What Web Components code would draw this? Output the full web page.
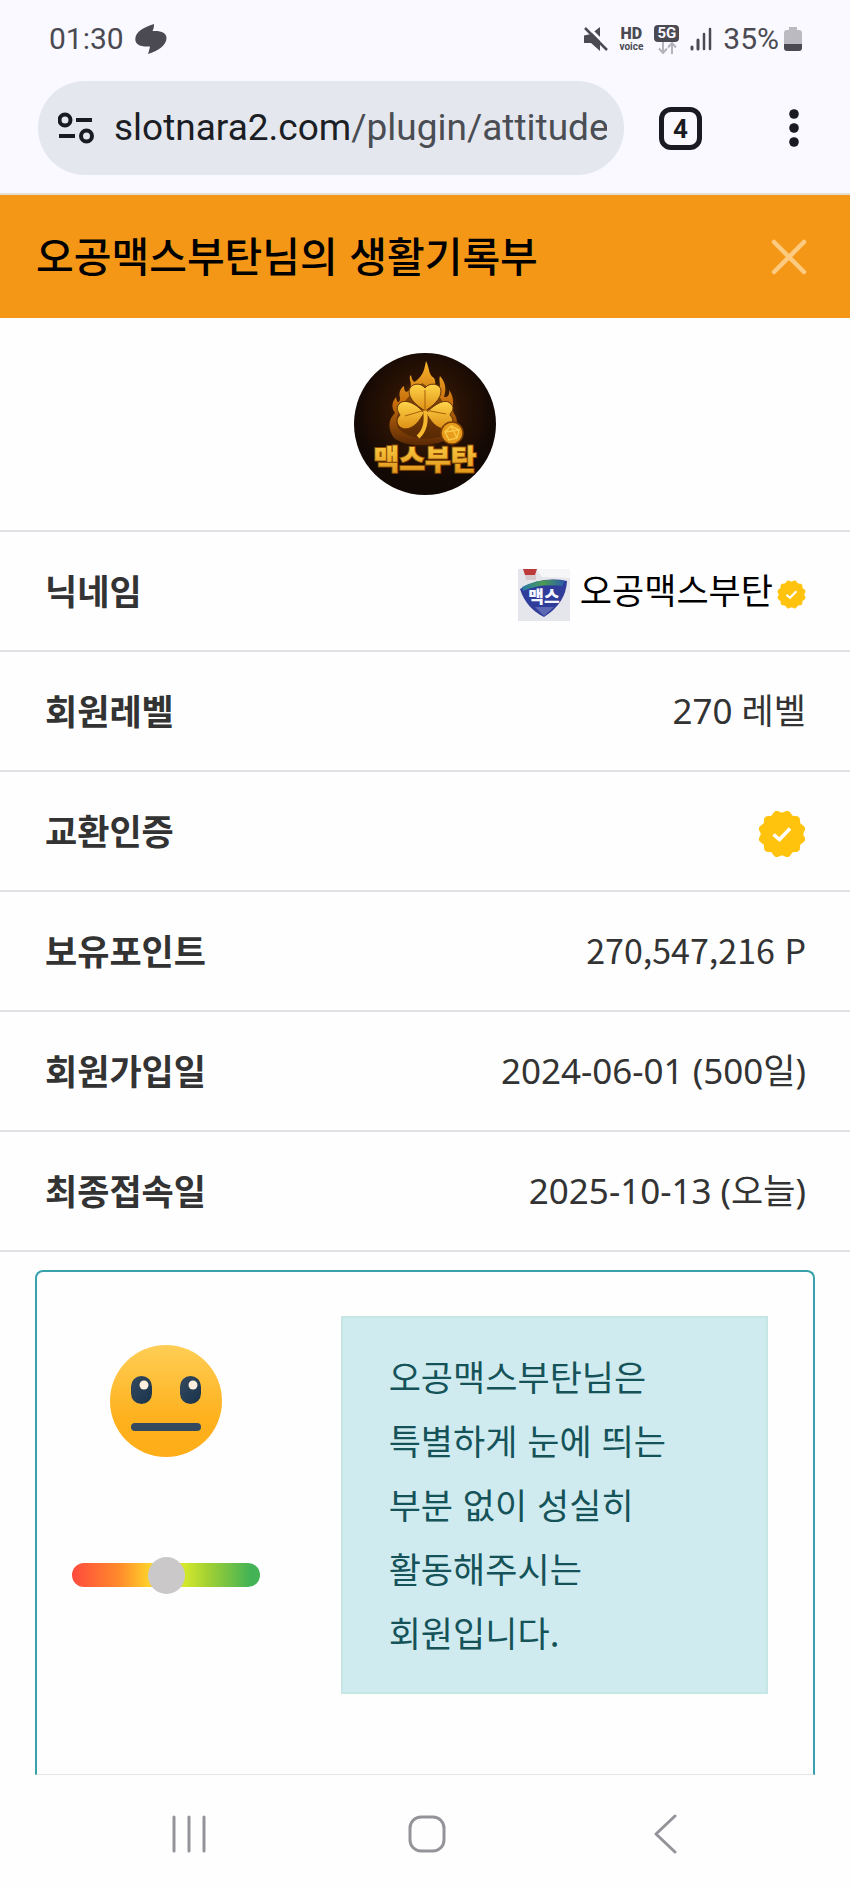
<!DOCTYPE html>
<html lang="ko">
<head>
<meta charset="UTF-8">
<meta name="viewport" content="width=device-width, initial-scale=1">
<title>오공맥스부탄님의 생활기록부</title>
<style>
  body {
    margin: 0;
    background: #fefefe;
    font-family: 'Noto Sans CJK KR', sans-serif;
    font-size: 35px;
    color: #333;
  }
</style>
</head>
<body>
<phone-screen>
  <status-bar slot="top" time="01:30" battery="35%"></status-bar>
  <browser-bar slot="top" host="slotnara2.com" path="/plugin/attitude" tabs="4"></browser-bar>
  <page-header>오공맥스부탄님의 생활기록부</page-header>
  <user-avatar></user-avatar>
  <profile-table></profile-table>
  <attitude-card value="50">오공맥스부탄님은 특별하게 눈에 띄는 부분 없이 성실히 활동해주시는 회원입니다.</attitude-card>
  <nav-bar slot="bottom"></nav-bar>
</phone-screen>

<script>
class PhoneScreen extends HTMLElement {
  constructor() {
    super();
    this.attachShadow({ mode: 'open' });
    this.shadowRoot.innerHTML = `
      <style>
        :host {
          display: flex;
          flex-direction: column;
          min-height: 100vh;
        }
        main {
          flex: 1;
          display: flex;
          flex-direction: column;
        }
      </style>
      <slot name="top"></slot>
      <main><slot></slot></main>
      <slot name="bottom"></slot>
    `;
  }
}

class StatusBar extends HTMLElement {
  connectedCallback() {
    this.attachShadow({ mode: 'open' });
    this.shadowRoot.innerHTML = `
      <style>
        :host {
          display: flex;
          align-items: center;
          justify-content: space-between;
          height: 78px;
          padding: 0 48px 0 49px;
          background: #f9f9ff;
          color: #4b4a52;
          font-family: Roboto, sans-serif;
          font-size: 30px;
          line-height: 36px;
        }
        .group {
          display: flex;
          align-items: center;
          gap: 11px;
        }
        .hd {
          display: flex;
          flex-direction: column;
          align-items: center;
          font-size: 16px;
          line-height: 15px;
          font-weight: 900;
        }
        .hd small {
          font-size: 10px;
          line-height: 11px;
          font-weight: 700;
        }
        .net {
          display: flex;
          flex-direction: column;
          align-items: center;
        }
        .net b {
          width: 25px;
          border-radius: 4px;
          background: #4b4a52;
          color: #f9f9ff;
          font-size: 15px;
          line-height: 17px;
          text-align: center;
        }
        .level {
          display: flex;
          align-items: center;
          gap: 5px;
        }
        svg { display: block; }
      </style>
      <div class="group">
        <span>${this.getAttribute('time')}</span>
        <svg width="32" height="30" viewBox="0 0 32 30" fill="#4b4a52">
          <path d="M19 0C9 3 0 8 .3 15.500C.5 20 4 23 15 22.500C14.500 25 14 27 13 30C23 27 32 21 31.500 13.500C31 9 27 6.500 17.500 7C18.500 5 19 3 19 0Z"/>
        </svg>
      </div>
      <div class="group">
        <svg width="25" height="26" viewBox="0 0 25 26">
          <path fill="#4b4a52" d="M1 9.500L8 8L17 1V25L8 17H1Z"/>
          <path stroke="#f9f9ff" stroke-width="3" d="M4 0L25 21"/>
          <path stroke="#4b4a52" stroke-width="2.500" d="M2 2L24 24"/>
        </svg>
        <span class="hd">HD<small>voice</small></span>
        <span class="net">
          <b>5G</b>
          <svg width="20" height="12" viewBox="0 0 20 12" fill="none" stroke="#b5b4bb" stroke-width="2">
            <path d="M6 0V11M2 6.500L6 11L10 6.500M15 12V1M11 5.500L15 1L19 5.500"/>
          </svg>
        </span>
        <svg width="22" height="24" viewBox="0 0 22 24" stroke="#4b4a52" stroke-width="3" stroke-linecap="round">
          <path d="M2 20V22M8 13V22"/><path stroke-width="2.500" d="M14 7V22M20 2V22"/>
        </svg>
        <span class="level">
          <span>${this.getAttribute('battery')}</span>
          <svg width="18" height="26" viewBox="0 0 18 26">
            <path fill="#bbbac1" d="M5 1H13V4H15Q18 4 18 7V18H0V7Q0 4 3 4H5Z"/>
            <path fill="#4b4a52" d="M0 18H18V22Q18 25 15 25H3Q0 25 0 22Z"/>
          </svg>
        </span>
      </div>
    `;
  }
}

class BrowserBar extends HTMLElement {
  connectedCallback() {
    this.attachShadow({ mode: 'open' });
    this.shadowRoot.innerHTML = `
      <style>
        :host {
          display: flex;
          align-items: center;
          padding: 3px 0 18px 38px;
          background: #f9f9ff;
          border-bottom: 2px solid #e3e0d6;
        }
        button {
          padding: 0;
          border: 0;
          background: none;
          font-family: Roboto, sans-serif;
          color: #1a1a22;
        }
        .address {
          flex: 1;
          min-width: 0;
          display: flex;
          align-items: center;
          gap: 20px;
          height: 94px;
          padding: 0 17px 0 20px;
          border-radius: 47px;
          background: #e4e7ee;
        }
        .address svg { flex: none; }
        .url {
          overflow: hidden;
          white-space: nowrap;
          font-size: 37px;
          line-height: 48px;
          color: #1b1e24;
        }
        .url span { color: #4a4d53; }
        .tool {
          flex: none;
          display: grid;
          place-items: center;
          width: 113px;
          height: 94px;
        }
        .count {
          box-sizing: border-box;
          width: 43px;
          height: 43px;
          border: 5px solid #1a1a22;
          border-radius: 12px;
          font-size: 26px;
          line-height: 34px;
          font-weight: 700;
          text-align: center;
        }
      </style>
      <button class="address">
        <svg width="36" height="32" viewBox="0 0 36 32" fill="none" stroke="#1a1a22" stroke-width="4">
          <circle cx="7" cy="8" r="5.500"/><path d="M18 8H34M1 24H17"/><circle cx="28.500" cy="24" r="5.500"/>
        </svg>
        <div class="url">${this.getAttribute('host')}<span>${this.getAttribute('path')}</span></div>
      </button>
      <button class="tool"><span class="count">${this.getAttribute('tabs')}</span></button>
      <button class="tool" aria-label="메뉴">
        <svg width="10" height="38" viewBox="0 0 10 38" fill="#1a1a22">
          <circle cx="5" cy="5" r="4.800"/><circle cx="5" cy="19" r="4.800"/><circle cx="5" cy="33" r="4.800"/>
        </svg>
      </button>
    `;
  }
}

class PageHeader extends HTMLElement {
  constructor() {
    super();
    this.attachShadow({ mode: 'open' });
    this.shadowRoot.innerHTML = `
      <style>
        :host {
          display: flex;
          align-items: center;
          justify-content: space-between;
          height: 123px;
          padding: 0 43px 0 36px;
          background: #f49716;
        }
        h1 {
          margin: 0 0 6px;
          font-size: 41px;
          line-height: 60px;
          font-weight: 500;
          color: #000;
        }
        button {
          padding: 0;
          border: 0;
          background: none;
        }
        svg { display: block; }
      </style>
      <h1><slot></slot></h1>
      <button aria-label="닫기">
        <svg width="36" height="36" viewBox="0 0 36 36" stroke="#fccb80" stroke-width="4.500" stroke-linecap="round">
          <path d="M3 3L33 33M33 3L3 33"/>
        </svg>
      </button>
    `;
  }
}

class UserAvatar extends HTMLElement {
  constructor() {
    super();
    this.attachShadow({ mode: 'open' });
    this.shadowRoot.innerHTML = `
      <style>
        :host {
          display: flex;
          justify-content: center;
          padding: 35px 0;
          border-bottom: 2px solid #e3e1e5;
        }
        text {
          font-family: 'Noto Sans CJK KR', sans-serif;
          font-weight: 900;
          font-size: 28px;
        }
      </style>
      <svg width="142" height="142" viewBox="0 0 142 142">
        <defs>
          <radialGradient id="glow" cx="50%" cy="42%" r="50%">
            <stop offset="0" stop-color="#8a4505"/><stop offset=".5" stop-color="#2b1304"/><stop offset="1" stop-color="#120804"/>
          </radialGradient>
          <linearGradient id="fire" x2="0" y2="1">
            <stop offset="0" stop-color="#f9b62c"/><stop offset=".5" stop-color="#c66d0c"/><stop offset="1" stop-color="#5a2804"/>
          </linearGradient>
          <linearGradient id="gold" x2="0" y2="1">
            <stop offset="0" stop-color="#ffd44a"/><stop offset="1" stop-color="#dd8f14"/>
          </linearGradient>
        </defs>
        <circle cx="71" cy="71" r="71" fill="url(#glow)"/>
        <path fill="url(#fire)" d="M40 85C32 73 36 65 41 60C37 54 38 49 42 44C43 51 46 50 46 45C44 38 48 34 50 33C50 38 52 41 55 37C60 31 53 25 57 22C58 28 60 30 62 28C70 21 70 17 72 8C76 16 74 21 80 25C83 29 79 36 84 38C88 34 84 27 86 23C94 32 91 40 90 44C94 45 96 41 95 37C103 48 96 56 101 62C105 68 102 79 98 84C85 93 54 96 40 85Z"/>
        <path fill="#4d2304" opacity=".6" d="M44 75C40 65 45 58 49 52C53 44 60 38 68 30C77 36 89 44 90 53C97 60 100 70 97 79C80 89 56 88 44 75Z"/>
        <g fill="url(#gold)" stroke="#653407">
          <path d="M71 58C62 52 55 46 55 38C56 30 67 29 71 35C75 29 87 30 87 38C87 46 79 53 71 58Z"/>
          <path d="M70 60C62 50 50 45 45 51C41 56 45 60 46 62C40 68 44 75 51 76C60 76 66 67 70 60Z"/>
          <path d="M72 60C82 50 92 45 97 51C102 56 96 60 96 62C102 68 97 75 91 76C82 76 76 67 72 60Z"/>
        </g>
        <path d="M71 57Q74 75 64 84" fill="none" stroke="#f5b82e" stroke-width="4"/>
        <path d="M71 37V57L51 63M71 57L92 61" fill="none" stroke="#a96008"/>
        <circle cx="98" cy="80" r="11" fill="#e89c1b" stroke="#7c3f06" stroke-width="1.500"/>
        <path d="M91 79L97 73L105 77L103 85L95 87ZM97 73L103 85M91 79L105 77" fill="none" stroke="#f9c847" stroke-width="1.500"/>
        <text x="71" y="117" text-anchor="middle" fill="url(#gold)" stroke="#8b4c07" stroke-width="2" paint-order="stroke">맥스부탄</text>
      </svg>
    `;
  }
}

// scalloped badge with a tick, size comes from --size
class VerifiedBadge extends HTMLElement {
  constructor() {
    super();
    this.attachShadow({ mode: 'open' });
    this.shadowRoot.innerHTML = `
      <style>
        :host {
          display: inline-block;
          vertical-align: middle;
          width: var(--size, 48px);
          height: var(--size, 48px);
        }
        svg { display: block; }
      </style>
      <svg width="100%" height="100%" viewBox="0 0 48 48">
        <path id="edge" fill="#ffc30e" stroke="#ffc30e" stroke-width="2" stroke-linejoin="round"/>
        <path d="M15.500 24.500L21.500 29.500L32 18.500" fill="none" stroke="#fff" stroke-width="3.500"/>
      </svg>
    `;
    let d = '';
    for (let i = 0; i < 120; i++) {
      const a = i * Math.PI / 60;
      const r = 21.5 - 1.3 * Math.cos(a * 12);
      d += (i ? 'L' : 'M') + (24 + r * Math.sin(a)).toFixed(1) + ' ' + (24 - r * Math.cos(a)).toFixed(1);
    }
    this.shadowRoot.getElementById('edge').setAttribute('d', d + 'Z');
  }
}

class MemberIcon extends HTMLElement {
  constructor() {
    super();
    this.attachShadow({ mode: 'open' });
    this.shadowRoot.innerHTML = `
      <style>
        :host {
          display: inline-block;
          vertical-align: middle;
        }
        svg { display: block; }
        text {
          font-family: 'Noto Sans CJK KR', sans-serif;
          font-weight: 900;
          font-size: 17px;
        }
      </style>
      <svg width="52" height="52" viewBox="0 0 52 52">
        <defs>
          <linearGradient id="leaf">
            <stop offset="0" stop-color="#297ba8"/><stop offset=".5" stop-color="#4c9b55"/><stop offset="1" stop-color="#2859ac"/>
          </linearGradient>
        </defs>
        <path fill="#e5e6eb" d="M0 0H52V52H0Z"/>
        <path fill="#f6f5f8" d="M18 0H52V9L24 8Z"/>
        <path fill="#bd3a3b" d="M5 0H19L17 6H7Z"/>
        <path fill="#d8c9ce" d="M7 6H18V11H8Z"/>
        <path fill="#303c99" d="M2 20Q24 7 49 12Q48 34 26 48Q8 39 2 20Z"/>
        <path fill="url(#leaf)" d="M4 18Q24 8 47 12L44 17Q22 14 5 22Z"/>
        <path fill="#5d68b5" d="M17 38H36L26 47Z"/>
        <text x="26" y="34" text-anchor="middle" fill="#f4f6ff">맥스</text>
      </svg>
    `;
  }
}

class ProfileTable extends HTMLElement {
  constructor() {
    super();
    this.attachShadow({ mode: 'open' });
    this.shadowRoot.innerHTML = `
      <style>
        :host { display: block; }
        table {
          width: 100%;
          border-spacing: 0;
          line-height: 52px;
        }
        th, td {
          box-sizing: border-box;
          height: 120px;
          border-bottom: 2px solid #e3e1e5;
          white-space: nowrap;
        }
        th {
          padding: 0 0 2px 45px;
          text-align: left;
          font-weight: 700;
        }
        td {
          padding: 0 44px 0 0;
          text-align: right;
          font-family: 'Noto Sans', 'Noto Sans CJK KR', sans-serif;
        }
        .name {
          padding-top: 2px;
          font-family: inherit;
          color: #000;
        }
        .point {
          padding-bottom: 2px;
          font-family: inherit;
          font-size: 34px;
        }
        .small {
          --size: 29px;
          margin-left: 4px;
        }
      </style>
      <table>
        <tr><th scope="row">닉네임</th><td class="name"><member-icon></member-icon> 오공맥스부탄<verified-badge class="small"></verified-badge></td></tr>
        <tr><th scope="row">회원레벨</th><td>270 레벨</td></tr>
        <tr><th scope="row">교환인증</th><td><verified-badge></verified-badge></td></tr>
        <tr><th scope="row">보유포인트</th><td class="point">270,547,216 P</td></tr>
        <tr><th scope="row">회원가입일</th><td>2024-06-01 (500일)</td></tr>
        <tr><th scope="row">최종접속일</th><td>2025-10-13 (오늘)</td></tr>
      </table>
    `;
  }
}

class AttitudeCard extends HTMLElement {
  connectedCallback() {
    this.attachShadow({ mode: 'open' });
    this.shadowRoot.innerHTML = `
      <style>
        :host {
          flex: 1;
          display: grid;
          grid-template-columns: 1fr 2fr;
          align-items: start;
          margin: 18px 35px 0;
          border: 2px solid #37a2ab;
          border-bottom: 1px solid #e3e5e7;
          border-radius: 8px 8px 0 0;
        }
        .mood {
          display: flex;
          flex-direction: column;
          align-items: center;
          gap: 99px;
          padding-top: 73px;
        }
        input {
          -webkit-appearance: none;
          appearance: none;
          width: 188px;
          height: 37px;
          margin: 0;
          background: none;
        }
        input::-webkit-slider-runnable-track {
          height: 24px;
          border-radius: 12px;
          background: linear-gradient(90deg, #ff4b3e, #ff8a2b 25%, #ffd52b 42%, #d3e82c 60%, #a3d133 72%, #43b355 95%);
        }
        input::-webkit-slider-thumb {
          -webkit-appearance: none;
          width: 37px;
          height: 37px;
          margin-top: -6px;
          border-radius: 50%;
          background: #cac8c8;
        }
        p {
          margin: 44px 45px;
          padding: 26px 46px 28px;
          border: 2px solid #c6e5e5;
          background: #cfebf0;
          color: #155359;
          line-height: 64px;
          word-break: keep-all;
        }
      </style>
      <div class="mood">
        <svg width="112" height="112" viewBox="0 0 112 112">
          <defs>
            <linearGradient id="skin" x2="0" y2="1">
              <stop offset="0" stop-color="#ffce55"/><stop offset=".65" stop-color="#feb11e"/><stop offset="1" stop-color="#fead16"/>
            </linearGradient>
            <linearGradient id="eye" x2="1" y2="1">
              <stop offset="0" stop-color="#34495e"/><stop offset="1" stop-color="#19334c"/>
            </linearGradient>
          </defs>
          <circle cx="56" cy="56" r="56" fill="url(#skin)"/>
          <rect x="21" y="31" width="21" height="28" rx="10.500" fill="url(#eye)"/>
          <rect x="70" y="31" width="21" height="28" rx="10.500" fill="url(#eye)"/>
          <circle cx="34" cy="40" r="4.500" fill="#fdeedd"/>
          <circle cx="83" cy="40" r="4.500" fill="#fdeedd"/>
          <rect x="21" y="78" width="70" height="8" rx="4" fill="#34495e"/>
        </svg>
        <input type="range" min="0" max="100" value="${this.getAttribute('value')}" aria-label="활동 태도">
      </div>
      <p><slot></slot></p>
    `;
  }
}

class NavBar extends HTMLElement {
  constructor() {
    super();
    this.attachShadow({ mode: 'open' });
    this.shadowRoot.innerHTML = `
      <style>
        :host {
          display: grid;
          grid-template-columns: repeat(3, 1fr);
          padding: 4px 66px 0 70px;
        }
        button {
          display: grid;
          place-items: center;
          height: 110px;
          padding: 0;
          border: 0;
          background: none;
        }
        svg {
          fill: none;
          stroke: #949399;
          stroke-width: 3;
          stroke-linecap: round;
          stroke-linejoin: round;
        }
      </style>
      <button aria-label="최근 앱"><svg width="40" height="40" viewBox="0 0 40 40"><path d="M5 3V37M20 3V37M35 3V37"/></svg></button>
      <button aria-label="홈"><svg width="40" height="40" viewBox="0 0 40 40"><rect x="3" y="3" width="34" height="34" rx="11"/></svg></button>
      <button aria-label="뒤로"><svg width="40" height="40" viewBox="0 0 40 40"><path d="M30 2L11 20L30 38"/></svg></button>
    `;
  }
}

customElements.define('phone-screen', PhoneScreen);
customElements.define('status-bar', StatusBar);
customElements.define('browser-bar', BrowserBar);
customElements.define('page-header', PageHeader);
customElements.define('user-avatar', UserAvatar);
customElements.define('verified-badge', VerifiedBadge);
customElements.define('member-icon', MemberIcon);
customElements.define('profile-table', ProfileTable);
customElements.define('attitude-card', AttitudeCard);
customElements.define('nav-bar', NavBar);
</script>
</body>
</html>
